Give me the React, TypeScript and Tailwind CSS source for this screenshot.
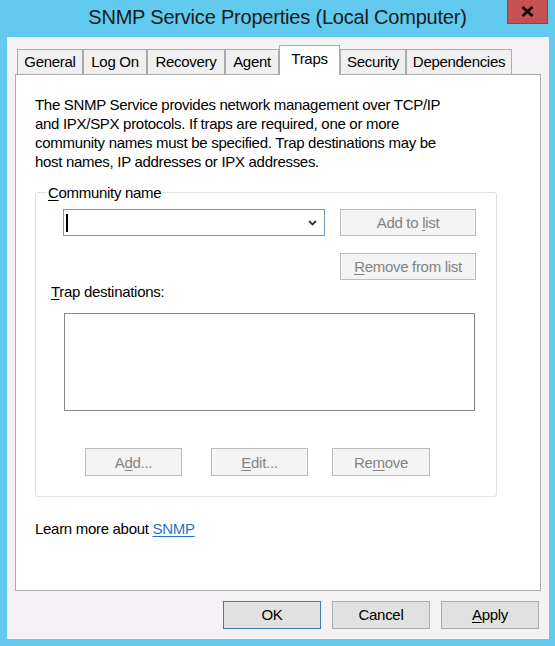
import React from "react";

const sans = { fontFamily: '"Liberation Sans", Arial, sans-serif' };

function U({ children }: { children: React.ReactNode }) {
  return <span className="underline underline-offset-2 decoration-1">{children}</span>;
}

const tabs = [
  { label: "General", w: "w-[66px]" },
  { label: "Log On", w: "w-[64px]" },
  { label: "Recovery", w: "w-[78px]" },
  { label: "Agent", w: "w-[54px]" },
  { label: "Traps", w: "w-[61px]", active: true },
  { label: "Security", w: "w-[66px]" },
  { label: "Dependencies", w: "w-[106px]" },
];

function DisabledButton({ children, className }: { children: React.ReactNode; className: string }) {
  return (
    <div
      className={`flex items-center justify-center border border-[#bcbcbc] bg-[#f4f4f4] text-[15px] tracking-[-0.3px] text-[#838383] ${className}`}
    >
      <span>{children}</span>
    </div>
  );
}

function DialogButton({ children, primary }: { children: React.ReactNode; primary?: boolean }) {
  return (
    <div
      className={`flex h-[28px] w-[98px] items-center justify-center border bg-[#e1e1e1] text-[15px] tracking-[-0.3px] text-black ${
        primary ? "border-[#3c7fb1]" : "border-[#adadad]"
      }`}
    >
      <span>{children}</span>
    </div>
  );
}

export default function App() {
  return (
    <div className="flex h-[646px] w-[555px] flex-col bg-[#62c9ef] select-none" style={sans}>
      {/* title bar */}
      <div className="flex h-[37px] shrink-0 items-start pl-[48px] pr-[7px]">
        <div className="flex-1 pt-[5px] text-center text-[20px] leading-[24px] tracking-[-0.2px] text-[#1a1a1a]">
          SNMP Service Properties (Local Computer)
        </div>
        <div className="flex h-[24px] w-[41px] items-center justify-center border border-[#a03c3c] border-t-0 bg-[#c75050]">
          <svg width="13" height="11" viewBox="0 0 13 11">
            <path d="M1.5 1 L11.5 10 M11.5 1 L1.5 10" stroke="#000" strokeWidth="2.6" />
          </svg>
        </div>
      </div>

      {/* client area */}
      <div className="ml-[7px] mr-[6px] mb-[7px] flex flex-1 flex-col bg-[#f4f2f5]">
        {/* tab strip */}
        <div className="flex h-[37px] items-end pl-[10px] text-[15px] leading-[18px] tracking-[-0.3px] text-black">
          {tabs.map((t) =>
            t.active ? (
              <div
                key={t.label}
                className={`relative z-10 -mb-px flex h-[30px] ${t.w} items-start justify-center border border-b-0 border-[#acacac] bg-white pt-[4px]`}
              >
                {t.label}
              </div>
            ) : (
              <div
                key={t.label}
                className={`flex h-[25px] ${t.w} items-center justify-center border border-b-0 border-[#acacac] bg-[#f0f0f0]`}
              >
                {t.label}
              </div>
            )
          )}
        </div>

        {/* tab page */}
        <div className="mx-[8px] flex h-[517px] flex-col border border-[#acacac] bg-white pl-[19px] pt-[20px] text-[15px] leading-[19px] tracking-[-0.3px] text-black">
          <p className="w-[430px]">
            The SNMP Service provides network management over TCP/IP
            <br />
            and IPX/SPX protocols. If traps are required, one or more
            <br />
            community names must be specified. Trap destinations may be
            <br />
            host names, IP addresses or IPX addresses.
          </p>

          <fieldset className="mt-[12px] w-[462px] rounded-[3px] border border-[#dcdfe3] px-0 pb-[20px]">
            <legend className="ml-[11px] px-[1px]">
              <U>C</U>ommunity name
            </legend>

            <div className="mt-[7px] flex items-start pl-[27px]">
              <div className="flex h-[27px] w-[262px] items-center border border-[#6f9cbf] bg-white pl-[2px] pr-[7px]">
                <div className="h-[18px] w-[1.5px] bg-black" />
                <div className="flex-1" />
                <svg width="9" height="6" viewBox="0 0 9 6">
                  <path d="M1 1 L4.5 4.5 L8 1" fill="none" stroke="#3a3a3a" strokeWidth="1.8" />
                </svg>
              </div>
              <div className="ml-[15px] flex flex-col">
                <DisabledButton className="h-[27px] w-[136px]">
                  Add to <U>l</U>ist
                </DisabledButton>
                <DisabledButton className="mt-[17px] h-[27px] w-[136px]">
                  <U>R</U>emove from list
                </DisabledButton>
              </div>
            </div>

            <div className="mt-[2px] pl-[15px]">
              <U>T</U>rap destinations:
            </div>

            <div className="ml-[28px] mt-[12px] h-[98px] w-[411px] border border-[#828790] bg-white" />

            <div className="mt-[37px] flex pl-[49px]">
              <DisabledButton className="h-[28px] w-[97px]">
                A<U>d</U>d...
              </DisabledButton>
              <DisabledButton className="ml-[29px] h-[28px] w-[97px]">
                <U>E</U>dit...
              </DisabledButton>
              <DisabledButton className="ml-[24px] h-[28px] w-[98px]">
                Re<U>m</U>ove
              </DisabledButton>
            </div>
          </fieldset>

          <div className="mt-[22px]">
            Learn more about{" "}
            <span className="text-[#1e73c8] underline underline-offset-2 decoration-1">SNMP</span>
          </div>
        </div>

        {/* dialog buttons */}
        <div className="mt-[10px] flex justify-end gap-[11px] pr-[10px]">
          <DialogButton primary>OK</DialogButton>
          <DialogButton>Cancel</DialogButton>
          <DialogButton>
            <U>A</U>pply
          </DialogButton>
        </div>
      </div>
    </div>
  );
}
